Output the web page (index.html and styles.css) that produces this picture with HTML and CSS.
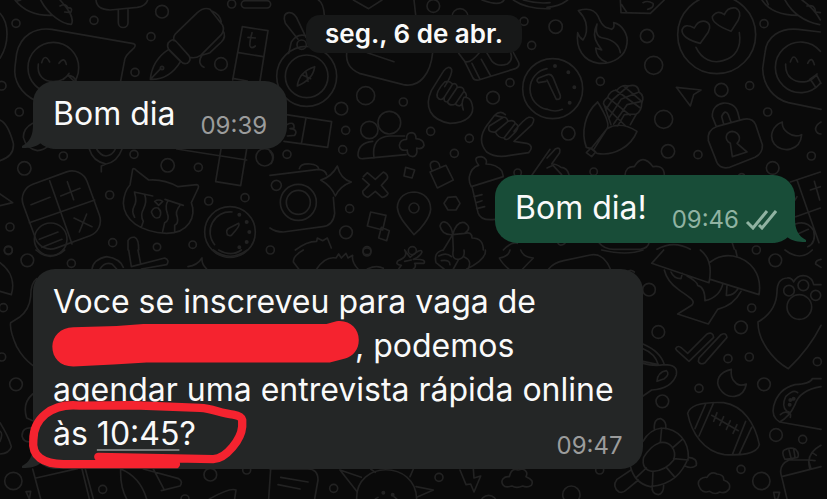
FILE: index.html
```
<!DOCTYPE html>
<html lang="pt-BR">
<head>
    <meta charset="UTF-8">
    <meta name="viewport" content="width=device-width, initial-scale=1.0">
    <title>Conversa</title>
    <link rel="stylesheet" href="styles.css">
</head>
<body>
    <!-- Wallpaper doodles -->
    <svg class="wallpaper" viewBox="0 0 2481 1497" preserveAspectRatio="xMidYMid slice" aria-hidden="true">
        <g>
            <circle cx="48" cy="70" r="12"/><circle cx="282" cy="61" r="12"/><circle cx="486" cy="35" r="19"/><circle cx="453" cy="110" r="12"/><circle cx="695" cy="12" r="12"/><circle cx="405" cy="217" r="12"/><circle cx="663" cy="192" r="19"/><circle cx="5" cy="257" r="13"/><circle cx="58" cy="336" r="12"/><circle cx="190" cy="468" r="12"/><circle cx="73" cy="505" r="20"/><circle cx="402" cy="463" r="12"/><circle cx="503" cy="496" r="20"/><circle cx="595" cy="502" r="12"/><circle cx="794" cy="472" r="26"/><circle cx="626" cy="603" r="12"/><circle cx="735" cy="593" r="12"/><circle cx="329" cy="585" r="12"/><circle cx="30" cy="681" r="12"/><circle cx="338" cy="728" r="12"/><circle cx="471" cy="741" r="11"/><circle cx="578" cy="734" r="11"/><circle cx="25" cy="752" r="12"/>
            <!-- chili -->
            <path d="M45 0C70 32 110 48 158 46M62 0L48 4M122 0C145 45 190 74 214 73C222 60 212 34 180 0M180 18Q198 8 204 24Q220 22 212 38L194 36"/>
            <!-- popsicle -->
            <path d="M288 0C290 22 305 28 330 30L412 22Q438 18 443 0M355 30V68a14 14 0 0 0 29 0V27"/>
            <rect x="724" y="2" width="88" height="22" rx="11"/>
            <path d="M0 40C28 70 28 130 0 175"/>
            <!-- speech bubble with smiley -->
            <path d="M110 304C60 280 40 240 45 200L50 160C62 105 105 82 155 88L400 131Q410 134 402 144C385 160 374 168 373 185L362 243"/>
            <circle cx="160" cy="203" r="76"/>
            <path d="M125 188q9-30 24-2M177 190q16-22 22 3M115 192C110 228 132 244 160 245Q194 243 207 220M190 238L204 226L225 246M204 226q18 0 26 20"/>
            <!-- fountain pen -->
            <path d="M451 238C455 195 480 165 506 148L542 184C525 212 500 240 451 238ZM451 238L482 206"/>
            <circle cx="486" cy="204" r="5"/>
            <path d="M505 128Q518 112 530 126L566 166Q576 180 562 190Q550 194 542 184L506 148Q500 138 505 128M522 122Q518 108 530 98L592 38Q612 20 630 28L668 76Q674 90 664 104L602 166Q586 176 570 172M634 32Q660 42 664 66M669 92Q680 110 664 126L630 158L606 166Q590 190 612 202"/>
            <!-- letter tiles -->
            <path d="M727 80L804 92L780 243M727 80L698 240M716 158L790 170M698 235L742 243M756 98Q748 128 750 138Q754 148 766 138M744 112L766 114M530 447L740 480M663 447L647 545L722 557L740 447"/>
            <path d="M98 370Q70 385 70 412Q78 445 112 452Q132 450 142 440M0 360Q24 370 40 430Q44 468 0 482M0 582L38 608L0 617"/>
            <path d="M268 447Q278 484 318 492Q352 486 366 447M290 447Q300 466 318 468Q338 466 346 447M304 515V498L318 492"/>
            <!-- calculator -->
            <rect x="82" y="528" width="204" height="204" rx="48" transform="rotate(-20 184 630)"/>
            <path d="M149 542L216 732M88 668L284 600M93 614L150 592M182 588L240 565M202 545L221 599M222 654L276 680M238 696L260 642"/>
            <circle cx="152" cy="718" r="49"/>
            <path d="M118 718L174 696M126 742L186 718"/>
            <!-- crying cat -->
            <path d="M390 555L398 508Q402 502 410 512L446 540Q490 536 534 560L590 554Q600 556 592 570L574 608C590 650 565 700 500 700C420 696 372 660 370 610Q372 574 390 555ZM403 576L458 588M495 598L550 616M404 580Q412 604 402 620Q394 634 404 652M434 584Q442 604 430 628Q420 646 430 664L424 682M504 602Q494 618 502 640Q510 660 494 668L488 694M540 616Q524 636 532 652Q536 670 524 676L524 692M464 604Q476 596 488 604L476 616ZM454 636Q460 620 474 624Q488 636 478 652Q462 660 454 636"/>
            <!-- stopwatch -->
            <circle cx="690" cy="696" r="76"/>
            <path d="M696 636A60 60 0 0 0 644 734M682 704Q676 690 688 684L716 670Q720 676 708 690L694 706Q686 708 682 704"/>
            <path class="dots" d="M718 644h0M740 666h0M748 696h0M740 726h0M718 742h0"/>
            <path d="M384 750L384 722Q390 710 404 712Q416 716 416 750"/>
        </g>

        <g transform="translate(810 0)">
            <circle cx="490" cy="18" r="19"/><circle cx="762" cy="64" r="12"/><circle cx="785" cy="136" r="12"/><circle cx="720" cy="248" r="12"/><circle cx="287" cy="287" r="27"/><circle cx="214" cy="326" r="19"/><circle cx="400" cy="306" r="12"/><circle cx="669" cy="293" r="19"/><circle cx="227" cy="391" r="12"/><circle cx="482" cy="394" r="12"/><circle cx="598" cy="415" r="12"/><circle cx="218" cy="449" r="12"/><circle cx="51" cy="463" r="12"/><circle cx="553" cy="460" r="12"/><circle cx="743" cy="518" r="11"/><circle cx="19" cy="556" r="15"/><circle cx="239" cy="626" r="12"/><circle cx="228" cy="697" r="19"/><circle cx="291" cy="752" r="12"/><circle cx="427" cy="752" r="12"/><circle cx="570" cy="50" r="24"/>
            <path d="M250 0L296 26L336 0M145 0Q160 8 163 45M432 0L437 45M636 0Q690 20 702 0M730 0Q770 28 840 26M760 0Q800 12 840 8"/>
            <!-- compass -->
            <path d="M84 118L46 70Q36 42 56 38Q74 36 84 62L108 112M56 160L64 126Q82 98 110 108"/>
            <circle cx="95" cy="134" r="14"/><circle cx="110" cy="229" r="90"/><circle cx="110" cy="229" r="64"/>
            <path d="M82 258Q86 216 134 200Q130 238 82 258M96 224L122 236M108 216L114 244"/>
            <path d="M230 158Q226 202 268 220L400 254C450 264 482 220 488 158M292 158L372 185"/>
            <!-- gift -->
            <path d="M566 160L584 184Q600 192 628 158M584 184L608 232Q612 242 626 240L736 206Q750 200 746 188L730 158M606 190L630 238M634 178L662 228M650 158L666 184Q684 202 712 192Q730 180 722 158"/>
            <!-- hands -->
            <path d="M520 214Q536 194 545 208Q548 222 524 260M520 214L484 272C462 320 480 360 540 370C590 368 616 345 606 312Q600 290 582 292Q572 308 580 330M524 246Q496 276 502 292Q512 306 524 290L548 252Q536 240 524 246M548 252Q560 248 562 262L532 306Q518 306 524 290M562 262Q582 258 582 274L556 312Q540 320 532 306M582 274Q592 282 588 292M556 312Q570 324 576 310"/>
            <path d="M706 344Q690 330 674 346L652 374Q618 420 650 456Q680 476 720 466L776 458Q794 438 770 430L732 424L786 374Q800 350 776 352Q764 356 732 394M674 346L700 352L658 378Q650 398 676 396L714 364Q710 350 700 352M714 364Q732 358 736 370L702 414Q684 414 676 396M736 370Q750 378 738 394L720 412Q708 424 702 414"/>
            <!-- clock -->
            <circle cx="848" cy="266" r="90"/>
            <path d="M831 206A62 62 0 0 0 831 328M831 224L806 234Q796 242 806 248L828 244"/>
            <!-- tiles and people -->
            <path d="M48 344L185 365L173 442L42 424M108 354L94 432M50 374Q74 362 72 384L60 386Q86 388 74 406L52 408M0 455Q14 468 4 490"/>
            <circle cx="298" cy="390" r="26"/><circle cx="358" cy="368" r="34"/>
            <path d="M308 424Q264 428 264 466Q266 478 280 476L408 464M312 474C306 432 322 410 360 408L404 408M410 418Q408 398 426 398Q438 400 438 416Q462 418 462 436Q456 450 440 444Q444 468 428 470Q410 468 412 450Q388 454 388 436Q390 418 410 418Z"/>
            <!-- camera and sparkle -->
            <path d="M0 526L146 508Q166 510 170 524M190 592L194 640Q190 676 158 680L40 696Q16 696 0 684M88 506Q92 490 120 492Q144 494 146 506M202 498Q212 538 244 546Q210 558 196 588Q184 558 152 540Q184 532 202 498Z"/>
            <circle cx="85" cy="607" r="54"/><circle cx="85" cy="607" r="36"/>
            <path d="M280 530L292 518L316 538L340 516Q356 524 352 536L334 556L354 580Q350 590 336 592L316 574L294 592Q278 588 278 574L298 554L278 536M407 502L434 510L426 534L402 528ZM302 636L348 646L338 690L292 678ZM334 682L358 692L350 722L326 714Z"/>
            <path d="M432 704C402 668 384 648 382 622C384 590 408 576 434 576C460 578 482 596 482 628C480 654 450 690 432 704ZM534 592L558 590L570 610L558 630L534 630L522 610ZM480 516L528 496L550 540L502 564ZM486 512Q474 488 490 484Q508 482 510 502"/>
            <circle cx="432" cy="624" r="15"/>
            <!-- baby bottle -->
            <path d="M598 530Q604 502 626 496Q606 470 634 470Q654 476 648 492Q680 492 696 514L700 530L604 560Q596 548 598 530M606 560L624 638Q632 664 676 658M612 590L636 584M618 608L636 602M620 626L644 620M786 525L840 448"/>
            <path d="M76 750Q110 724 140 724L142 714L158 722L172 714L184 744M548 704Q516 706 510 678Q514 660 530 668Q546 680 548 704Q560 662 584 668Q608 684 584 700L548 704L520 750M548 704L550 750M584 700Q606 694 606 714Q640 714 640 750M700 750Q724 724 742 730"/>
        </g>

        <g transform="translate(1641 0)">
            <circle cx="26" cy="80" r="20"/><circle cx="300" cy="108" r="20"/><circle cx="320" cy="196" r="27"/><circle cx="651" cy="71" r="12"/><circle cx="160" cy="244" r="12"/><circle cx="523" cy="270" r="20"/><circle cx="608" cy="257" r="12"/><circle cx="350" cy="358" r="27"/><circle cx="662" cy="336" r="12"/><circle cx="64" cy="400" r="20"/><circle cx="363" cy="454" r="20"/><circle cx="453" cy="464" r="12"/><circle cx="793" cy="468" r="12"/><circle cx="677" cy="504" r="19"/><circle cx="140" cy="515" r="11"/>
            <path d="M0 22Q36 20 62 0M220 0L222 38L310 40L352 0M224 14L240 38M288 8Q302 0 318 10Q322 24 302 28"/>
            <!-- flame -->
            <path d="M94 32Q138 18 154 50Q162 72 176 82L194 88Q204 82 200 68C226 74 244 104 240 130C236 170 198 192 156 190C108 184 86 144 92 98Q96 112 108 120Q124 98 116 66Q110 48 94 32ZM150 72Q142 110 168 114Q214 122 220 158M150 72Q134 104 152 132L164 150L146 144Q148 176 178 186"/>
            <!-- heart eyes -->
            <circle cx="509" cy="104" r="117"/>
            <path d="M460 130Q404 116 405 90Q412 68 442 84Q454 60 474 64Q496 72 484 96ZM552 94Q494 72 496 50Q510 28 532 44Q542 20 566 24Q586 34 574 60ZM447 142C464 178 496 192 528 182C566 172 584 142 577 98"/>
            <!-- right edge repeats -->
            <path d="M645 0C668 36 710 46 752 46M658 0L664 14M714 0C738 44 780 66 818 74M765 0Q800 24 820 60M780 18Q804 12 806 36L820 38M820 96L754 88C700 82 658 110 654 158L647 205C648 258 680 296 724 308L822 328M820 154A76 76 0 1 0 820 250M730 186q10-30 22 0M782 190q12-24 20 4M716 192C714 230 742 252 780 244Q800 238 810 222M788 238L808 224L822 250M790 238L806 262"/>
            <path d="M822 366Q804 376 806 390Q810 402 822 402"/>
            <!-- clock hand -->
            <path d="M0 224Q12 220 18 232L40 286Q42 300 28 298L0 240M0 328Q26 338 46 328"/>
            <path class="dots" d="M24 198h0M64 217h0M82 262h0M68 308h0"/>
            <!-- corn -->
            <path d="M152 306C112 340 102 400 118 442L132 446L150 460C200 470 252 440 270 394Q220 362 180 386L142 446M152 306Q192 370 180 386L132 446M118 458L132 444L146 456L134 470ZM172 316Q164 306 182 292Q190 270 210 270Q226 252 244 258Q274 250 276 276Q294 288 284 310Q284 334 268 342L250 374M172 316L192 374M182 292L250 346M172 316L236 378M206 270L280 324M230 258L284 304M276 276L222 298L186 354M284 304L240 314L200 372M244 258L196 300L176 330M268 342L232 344L212 378"/>
            <path d="M388 262L462 270L440 284L430 318ZM706 366C674 378 666 410 682 432C704 460 760 454 764 404Q742 414 722 398Q704 384 706 366Z"/>
            <!-- padlock -->
            <path d="M484 422Q480 390 508 380L588 358Q616 352 626 374L646 434Q648 460 624 472L548 502Q520 508 510 488ZM508 380L496 350C494 300 560 296 572 336L578 360M530 372L524 350Q534 326 544 344L552 366M550 430C530 418 536 396 556 394C580 398 582 420 570 430L600 456L556 470Z"/>
            <path d="M234 526Q236 498 262 500Q286 458 318 500Q352 494 352 526M0 474L26 446Q42 440 38 458L14 492Q30 492 42 502Q60 502 66 524M0 504L18 496L44 524"/>
            <path d="M730 546L820 516M750 540L816 728M746 650L820 624M790 570L820 560M802 544L818 600M745 672Q780 660 800 692Q808 730 782 740M744 600L750 590M752 702L784 688"/>
            <path d="M156 728Q172 748 202 748L280 748Q304 744 306 728M330 748Q380 720 430 748M556 730L562 748M576 524Q584 518 592 524M32 728Q38 742 54 730"/>
        </g>

        <g transform="translate(0 750)">
            <circle cx="82" cy="31" r="19"/><circle cx="214" cy="40" r="12"/><circle cx="25" cy="0" r="12"/><circle cx="10" cy="173" r="12"/><circle cx="5" cy="321" r="12"/><circle cx="48" cy="403" r="19"/><circle cx="40" cy="693" r="26"/><circle cx="308" cy="718" r="12"/><circle cx="631" cy="674" r="19"/><circle cx="740" cy="660" r="12"/><circle cx="555" cy="747" r="12"/><circle cx="811" cy="0" r="12"/>
            <path d="M108 0Q150 38 194 0M0 38C36 64 44 100 34 134L0 124M110 86Q92 100 92 140Q88 180 58 202L32 218Q28 240 50 290Q70 326 98 346M98 432Q66 460 80 504L98 512M0 518Q26 560 34 590Q28 610 0 612M0 574Q10 550 0 544M98 534Q66 530 66 558Q70 580 98 574"/>
            <path d="M276 57Q280 28 320 20Q360 26 370 52M300 57Q314 34 336 42L350 57M386 0L394 50L494 24Q510 30 500 44L424 57M414 0L422 42M564 50Q592 46 606 24Q604 42 620 57M640 0Q690 38 742 0M656 0Q694 22 724 0"/>
            <!-- shirt and pencil -->
            <path d="M98 657L122 747M108 684L232 656M78 725L92 724L88 747ZM246 657L268 747M256 657L280 747M362 657Q360 710 380 747M362 657Q420 680 440 747M430 657L536 686Q550 694 540 708L484 722M460 657L492 718M628 747Q690 712 708 720L704 747M806 747L812 657"/>
        </g>

        <g transform="translate(810 750)">
            <circle cx="291" cy="6" r="12"/><circle cx="191" cy="715" r="12"/><circle cx="507" cy="682" r="12"/><circle cx="656" cy="760" r="24"/>
            <!-- dumpling, star, drum, pretzel -->
            <path d="M100 0Q70 16 70 36L86 57M140 57Q166 18 198 24L206 12L214 24L228 10L234 24L248 16Q244 36 264 57M292 57Q320 44 340 55M404 0Q416 20 384 32Q374 44 394 46L386 57M404 0L420 22Q454 -8 456 6Q450 20 430 28Q470 26 462 40L434 40Q440 50 430 57M404 34L424 30M520 0Q490 6 498 38Q510 48 522 57M506 18Q530 6 544 20M514 32Q540 28 540 44M550 0Q544 30 566 28Q586 24 582 0M566 28L550 57M582 20Q608 32 594 57M646 0Q650 28 590 57M720 0Q716 20 688 24Q696 40 716 57M752 0Q760 22 790 24Q776 38 758 57"/>
            <!-- note, sun, bolt, cloud -->
            <path d="M0 657H112Q144 656 144 690L134 747M32 682L114 696M24 704L90 717M210 660L262 726M210 660L274 682M302 657L316 667M430 657L420 680M438 710L490 720L440 742"/>
            <path d="M260 747C256 630 438 630 440 747M316 747L324 742M380 747L372 740M570 660L588 704L602 702L612 726L632 678L612 684L610 657M700 706C688 690 704 678 718 680Q724 652 744 660L758 657Q776 664 768 680Q794 690 784 706Q772 714 758 708Q740 716 726 708Q706 714 700 706"/>
            <path class="dots" d="M340 728h0M368 734h0"/>
        </g>

        <g transform="translate(1641 750)">
            <circle cx="685" cy="31" r="19"/><circle cx="628" cy="0" r="12"/><circle cx="306" cy="119" r="19"/><circle cx="614" cy="174" r="12"/><circle cx="334" cy="246" r="19"/><circle cx="582" cy="232" r="19"/><circle cx="543" cy="326" r="12"/><circle cx="607" cy="321" r="12"/><circle cx="811" cy="335" r="12"/><circle cx="651" cy="403" r="19"/><circle cx="456" cy="415" r="12"/><circle cx="346" cy="454" r="19"/><circle cx="687" cy="555" r="19"/><circle cx="767" cy="568" r="12"/><circle cx="582" cy="658" r="12"/><circle cx="643" cy="693" r="26"/><circle cx="158" cy="660" r="12"/><circle cx="73" cy="734" r="26"/>
            <path d="M5 57Q20 38 50 32L130 15Q170 8 190 57M164 0Q240 18 288 0M242 66Q250 56 262 66M714 0Q760 36 796 0M822 28Q804 32 806 42L822 52"/>
            <!-- mushrooms -->
            <path d="M350 0L314 40L486 98C496 50 484 18 460 0M490 36Q520 12 558 18C612 28 646 74 636 134L490 88M352 60Q360 94 394 118C430 144 448 152 434 166L392 192L484 222L512 178Q560 166 582 124M372 66Q380 86 402 86L406 70M420 78Q450 94 452 106Q474 112 474 152Q518 142 528 100M540 106L538 136Q558 138 572 118M566 0L570 18"/>
            <!-- double check -->
            <path d="M386 296Q392 284 404 294L422 310L480 252Q498 244 500 262L426 334L390 302ZM456 324L522 254Q538 246 540 262L474 338Q460 346 454 334Z"/>
            <!-- paw guitar pick -->
            <path d="M822 226C794 282 762 320 724 356C676 330 632 270 633 216Q688 184 690 126Q690 86 720 84Q734 82 740 96Q752 72 778 78Q796 84 800 104L822 104"/>
            <circle cx="757" cy="171" r="37"/><circle cx="726" cy="122" r="16"/><circle cx="769" cy="106" r="16"/><circle cx="806" cy="136" r="15"/>
            <path d="M288 282Q340 304 352 344Q394 344 388 374Q374 416 314 420L288 438M288 296Q324 310 334 344L288 334M288 340Q320 350 352 344M330 394Q332 366 358 362Q370 372 352 386ZM553 358C516 366 504 392 518 416C540 450 590 448 598 402Q574 412 562 394Q550 382 553 358Z"/>
            <!-- football -->
            <path d="M422 490C430 460 480 456 530 458C590 468 624 520 637 584C630 614 580 616 532 614C470 604 434 550 422 490ZM476 462L444 536M500 458L456 558M596 514L556 614M614 532L576 614M494 496L574 542M510 488L500 514M530 500L518 526M550 512L538 538M570 524L558 550"/>
            <!-- taco -->
            <path d="M822 538L698 516Q672 500 680 468Q694 416 744 404Q790 402 796 386L822 386M822 410Q758 420 744 464Q728 500 698 516M716 440Q702 470 720 484M716 440Q740 416 752 428M720 484Q734 486 730 502M700 494Q716 480 728 492"/>
            <path class="dots" d="M730 450h0M740 446h0M728 464h0"/>
            <!-- turtle -->
            <path d="M288 574Q308 538 344 534C394 536 426 574 424 624C406 668 376 704 310 710Q262 700 250 648M290 622Q310 588 338 578C370 572 390 600 380 630Q356 662 318 664C296 664 284 646 290 622ZM344 534L340 578M406 568L376 594M424 630L380 626M384 682L358 652M316 710L318 664M268 682L298 654M322 538Q320 504 342 506Q360 514 356 536M424 622Q452 624 448 646Q434 658 414 648M350 706Q350 732 334 734Q312 730 316 710M252 660L210 688Q194 710 216 726Q230 730 240 718L274 690"/>
            <path d="M456 708C448 690 468 680 480 682Q492 662 510 672Q532 674 530 690Q554 698 546 718Q536 732 518 726Q504 736 488 724Q464 732 456 708ZM680 727H698L692 747L684 747Z"/>
            <!-- bottle -->
            <path d="M720 747L704 680L822 650M704 680Q692 646 726 630L784 630L792 656M714 628Q702 606 712 600Q730 590 746 598Q758 610 752 622Q732 626 714 628M726 600L732 624M740 596L744 622M822 586Q776 610 788 654M788 630L804 632M796 608L808 616"/>
        </g>
    </svg>

    <main class="chat">
        <div class="date">seg., 6 de abr.</div>

        <div class="message received">
            <p>Bom dia</p>
            <time>09:39</time>
            <svg class="tail" viewBox="0 0 32 24" aria-hidden="true"><path d="M11 0C11 10 8 17 0 21Q-1 23 1 23C8 23 14 22 19 18L32 24V0Z"/></svg>
        </div>

        <div class="message sent">
            <p>Bom dia!</p>
            <time>09:46
                <svg class="checks" viewBox="0 0 32 20" role="img" aria-label="Entregue"><path d="M2 12L8 18L22 1M14 15L17 18L31 1"/></svg>
            </time>
            <svg class="tail" viewBox="0 0 32 24" aria-hidden="true"><path d="M11 0C11 10 8 17 0 21Q-1 23 1 23C8 23 14 22 19 18L32 24V0Z"/></svg>
        </div>

        <div class="message received long">
            <p>Voce se inscreveu para vaga de <span class="redacted"></span>, podemos agendar uma entrevista rápida online às <a href="#">10:45</a>? <time>09:47</time></p>
            <svg class="tail" viewBox="0 0 32 24" aria-hidden="true"><path d="M11 0C11 10 8 17 0 21Q-1 23 1 23C8 23 14 22 19 18L32 24V0Z"/></svg>
            <!-- Red marker -->
            <svg class="marker" viewBox="99 807 1830 600" aria-hidden="true">
                <path class="fill" d="M157 1040C158 1008 180 984 220 982L350 978L430 972H980L1010 964C1048 958 1077 985 1077 1020C1077 1050 1060 1068 1036 1076L990 1088H440L340 1094L220 1100C180 1100 157 1074 157 1040Z"/>
                <path d="M295 1371L640 1378C680 1376 724 1318 727 1280V1260Q724 1248 700 1244C660 1240 640 1226 600 1224L400 1216L240 1217C150 1208 100 1260 100 1320C94 1370 130 1392 190 1393H528"/>
            </svg>
        </div>
    </main>
</body>
</html>
```
FILE: styles.css
```
body {
    margin: 0;
    min-height: 100vh;
    position: relative;
    overflow: hidden;
    background-color: #0a0a0a;
    color: #fafafa;
    font-family: Inter, "Liberation Sans", sans-serif;
}
.wallpaper {
    position: absolute;
    top: 0;
    left: 0;
    width: 100%;
    height: 100%;
    fill: none;
    stroke: #222222;
    stroke-width: 5;
    stroke-linecap: round;
    stroke-linejoin: round;
}
.wallpaper .dots {
    stroke-width: 12;
}
.chat {
    position: relative;
    display: flex;
    flex-direction: column;
    align-items: flex-start;
    gap: 26px;
    padding: 15px 32px 30px 33px;
}
.date {
    align-self: center;
    margin-bottom: 2px;
    padding: 0 19px;
    border-radius: 14px;
    background-color: #171818;
    font-size: 26px;
    font-weight: 600;
    line-height: 38px;
}
.message {
    position: relative;
    display: flex;
    align-items: flex-end;
    gap: 25px;
    max-width: 80%;
    box-sizing: border-box;
    padding: 11px 20px 13px;
    border-radius: 22px;
    background-color: #242626;
    font-size: 32px;
    line-height: 44px;
}
.message p {
    margin: 0;
}
.message time {
    display: flex;
    align-items: center;
    gap: 6px;
    color: #9b9c9c;
    font-size: 24px;
    line-height: 28px;
    margin-bottom: -4px;
}
.message a {
    color: inherit;
    text-decoration: underline;
    text-decoration-color: #777979;
    text-decoration-thickness: 2px;
    text-underline-offset: 4px;
}
.sent {
    align-self: flex-end;
    padding-right: 18px;
    background-color: #184d38;
}
.sent time {
    color: #90b3a2;
}
/* The time shares the last line of the text */
.long time {
    float: right;
    margin-top: 20px;
}
.tail {
    position: absolute;
    left: -11px;
    bottom: 0;
    width: 32px;
    height: 24px;
    fill: #242626;
}
.sent .tail {
    left: auto;
    right: -11px;
    transform: scaleX(-1);
    fill: #184d38;
}
.checks {
    width: 32px;
    height: 20px;
    fill: none;
    stroke: #90b3a2;
    stroke-width: 3;
}
.redacted {
    display: inline-block;
    width: 302px;
}
.marker {
    position: absolute;
    top: 0;
    left: 0;
    width: 100%;
    overflow: visible;
    pointer-events: none;
    fill: none;
    stroke: #f5232f;
    stroke-width: 25;
    stroke-linecap: round;
    stroke-linejoin: round;
}
.marker .fill {
    fill: #f5232f;
    stroke: none;
}
```
